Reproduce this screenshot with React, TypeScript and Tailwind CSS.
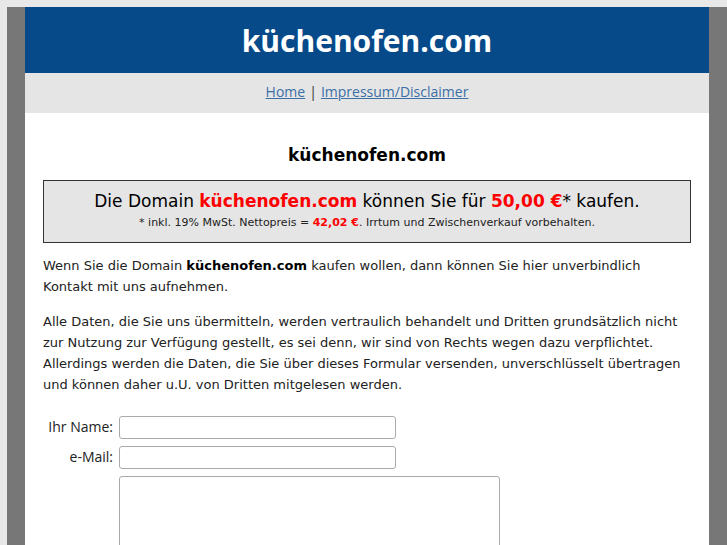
export default function App() {
  return (
    <div className="min-h-screen bg-[#e8e8e8] pt-[7px] pl-[7px] overflow-hidden">
      <div className="w-[720px] bg-[#777777] px-[18px]">
        <div className="bg-white">
          <div className="flex h-[66px] items-center justify-center bg-[#074a8a]">
            <h1 className="text-[30px] font-bold text-white [font-family:'Open_Sans',sans-serif]">küchenofen.com</h1>
          </div>
          <div className="flex h-[40px] items-center justify-center bg-[#e5e5e5] pb-[3px] text-[14px] text-[#333] [font-family:'Open_Sans',sans-serif]">
            <a href="#" className="text-[#3b6fa6] underline">Home</a>
            <span className="mx-[4px]">|</span>
            <a href="#" className="text-[#3b6fa6] underline">Impressum/Disclaimer</a>
          </div>
          <div className="px-[18px] pb-10 pt-[30px] text-[#222] [font-family:'DejaVu_Sans',sans-serif]">
            <h2 className="text-center text-[17px] font-bold leading-[24px] text-black">küchenofen.com</h2>
            <div className="mt-[13px] border border-[#333] bg-[#e5e5e5] px-2 pb-[12px] pt-[8px] text-center">
              <p className="text-[17px] leading-[24px] text-black">
                Die Domain <span className="font-bold text-[#ff0000]">küchenofen.com</span> können Sie für{" "}
                <span className="font-bold text-[#ff0000]">50,00 €</span>* kaufen.
              </p>
              <p className="mt-[2px] text-[11px] leading-[15px] text-[#222]">
                * inkl. 19% MwSt. Nettopreis = <span className="font-bold text-[#ff0000]">42,02 €</span>. Irrtum und Zwischenverkauf vorbehalten.
              </p>
            </div>
            <p className="mt-[12px] text-[13px] leading-[21.3px]">
              Wenn Sie die Domain <b className="text-black">küchenofen.com</b> kaufen wollen, dann können Sie hier unverbindlich Kontakt mit uns aufnehmen.
            </p>
            <p className="mt-[13px] text-[13px] leading-[21.3px]">
              Alle Daten, die Sie uns übermitteln, werden vertraulich behandelt und Dritten grundsätzlich nicht zur Nutzung zur Verfügung gestellt, es sei denn, wir sind von Rechts wegen dazu verpflichtet. Allerdings werden die Daten, die Sie über dieses Formular versenden, unverschlüsselt übertragen und können daher u.U. von Dritten mitgelesen werden.
            </p>
            <form className="mt-[20px] grid grid-cols-[70px_auto] gap-x-[6px] gap-y-[7px] text-[14px] [font-family:'Open_Sans',sans-serif]">
              <label className="self-start pt-[1px] text-right leading-[20px] text-[#222]">Ihr Name:</label>
              <input className="h-[23px] w-[277px] rounded-[3px] border border-[#aaa] bg-white" />
              <label className="self-start pt-[1px] text-right leading-[20px] text-[#222]">e-Mail:</label>
              <input className="h-[23px] w-[277px] rounded-[3px] border border-[#aaa] bg-white" />
              <span />
              <textarea className="h-[120px] w-[381px] resize-none rounded-[3px] border border-[#aaa] bg-white" />
            </form>
          </div>
        </div>
      </div>
    </div>
  );
}
